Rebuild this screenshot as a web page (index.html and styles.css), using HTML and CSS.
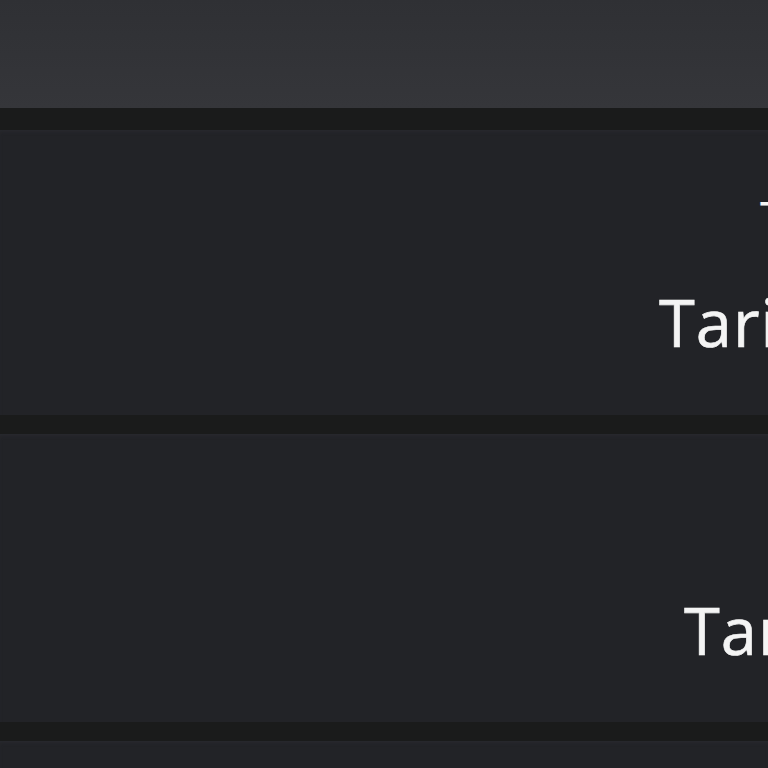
FILE: index.html
```html
<!DOCTYPE html>
<html lang="id">
<head>
<meta charset="utf-8">
<title>Tarif</title>
<link rel="stylesheet" href="styles.css">
</head>
<body>
  <header class="topbar"></header>
  <main class="list">
    <section class="card card-first">
      <div class="card-body">
        <div class="label">Tarif</div>
        <div class="title">Tarif Dasar</div>
      </div>
    </section>
    <section class="card card-second">
      <div class="card-body">
        <div class="title">Tarif Tambahan</div>
      </div>
    </section>
    <section class="card card-third"></section>
  </main>
</body>
</html>
```

FILE: styles.css
```css
html, body {
  margin: 0;
  padding: 0;
}
body {
  width: 768px;
  height: 768px;
  overflow: hidden;
  background: #1a1b1b;
  font-family: "Open Sans", "Liberation Sans", sans-serif;
  color: #f4f4f4;
}
.topbar {
  height: 108px;
  background: linear-gradient(#2f3034, #35363a);
}
.list {
  display: flex;
  flex-direction: column;
  gap: 19px;
  padding-top: 22px;
}
.card {
  background: #222327;
  box-shadow: inset 0 3px 4px -2px #2a2b30;
  flex-shrink: 0;
}
.card-first { height: 285px; }
.card-second { height: 288px; }
.card-third { height: 40px; }
.card-body {
  display: flex;
  flex-direction: column;
  white-space: nowrap;
}
.label {
  font-size: 48px;
  line-height: 56px;
  font-weight: 500;
  padding-left: 760px;
  margin-top: 60px;
}
.title {
  font-size: 65px;
  line-height: 64px;
  font-weight: 500;
  letter-spacing: 1px;
  -webkit-text-stroke: 0.6px #f4f4f4;
}
.card-first .title {
  padding-left: 659px;
  margin-top: 44px;
}
.card-second .title {
  padding-left: 684px;
  margin-top: 164px;
}
```
